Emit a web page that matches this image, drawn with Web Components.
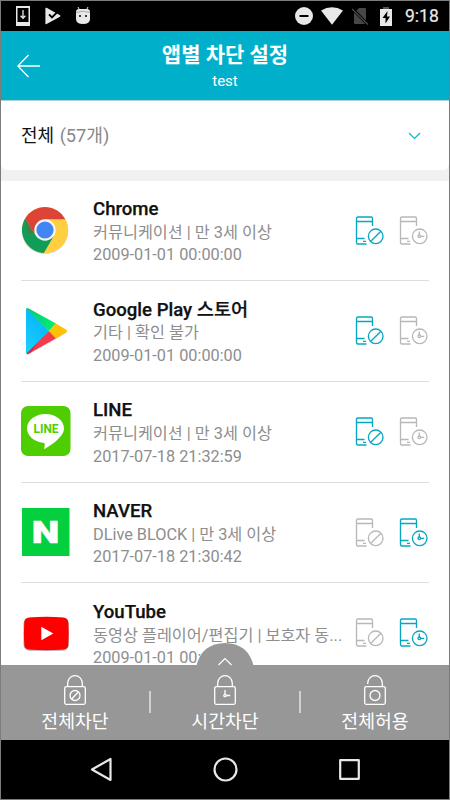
<!DOCTYPE html>
<html lang="ko">
<head>
<meta charset="utf-8">
<title>앱별 차단 설정</title>
<style>
html,body{margin:0;padding:0;overflow:hidden;background:#fff}
body{font-family:Roboto,"Noto Sans CJK KR",sans-serif}
</style>
</head>
<body>
<phone-screen>
  <status-bar></status-bar>
  <page-header><span slot="title">앱별 차단 설정</span><span slot="sub">test</span></page-header>
  <filter-bar><span slot="label">전체</span><span slot="count">(57개)</span></filter-bar>
  <app-list>
    <app-row icon="chrome" mode="block"><span slot="name">Chrome</span><span slot="meta">커뮤니케이션 | 만 3세 이상</span><span slot="date">2009-01-01 00:00:00</span></app-row>
    <app-row icon="play" mode="block"><span slot="name">Google Play 스토어</span><span slot="meta">기타 | 확인 불가</span><span slot="date">2009-01-01 00:00:00</span></app-row>
    <app-row icon="line" mode="block"><span slot="name">LINE</span><span slot="meta">커뮤니케이션 | 만 3세 이상</span><span slot="date">2017-07-18 21:32:59</span></app-row>
    <app-row icon="naver" mode="time"><span slot="name">NAVER</span><span slot="meta">DLive BLOCK | 만 3세 이상</span><span slot="date">2017-07-18 21:30:42</span></app-row>
    <app-row icon="youtube" mode="time"><span slot="name">YouTube</span><span slot="meta">동영상 플레이어/편집기 | 보호자 동...</span><span slot="date">2009-01-01 00:00:00</span></app-row>
  </app-list>
  <action-bar>
    <lock-action kind="block">전체차단</lock-action>
    <lock-action kind="time">시간차단</lock-action>
    <lock-action kind="open">전체허용</lock-action>
  </action-bar>
  <nav-bar></nav-bar>
</phone-screen>
<script>
function define(name, render) {
  customElements.define(name, class extends HTMLElement {
    constructor() {
      super();
      this.attachShadow({ mode: 'open' });
    }
    connectedCallback() {
      this.shadowRoot.innerHTML = render(this);
    }
  });
}

define('phone-screen', () => `<style>
:host{display:flex;flex-direction:column;box-sizing:border-box;width:450px;height:800px;border:1px solid #7c7c7c;background:#fff;overflow:hidden}
</style><slot></slot>`);

define('status-bar', () => `<style>
:host{display:flex;align-items:center;flex:none;height:30px;box-sizing:border-box;background:#000;color:#e8e8e8;padding:0 9px 0 15px}
svg{display:block;flex:none}
.a{margin-right:15px}.sp{flex:1}
.t{font-size:17.5px;font-weight:400;-webkit-text-stroke:.2px #e8e8e8;line-height:30px;width:35px;white-space:nowrap}
</style>
<svg class="a" width="14" height="20" viewBox="0 0 14 20"><path fill="#e8e8e8" fill-rule="evenodd" d="M0 0h14v20H0zM1.5 2v14h11V2z"/><path d="M7 4v8M4.6 9.800 7 12.300 9.400 9.800" fill="none" stroke="#e8e8e8" stroke-width="1.3"/></svg>
<svg class="a" width="16" height="18" viewBox="0 0 16 18"><path fill="#e8e8e8" d="M.4 1.500Q.4.300 1.600.8L15 8.200q1 .8 0 1.600L1.600 17q-1.200.6-1.200-.6z"/><path d="M4 7.400l3 3 8-8" fill="none" stroke="#000" stroke-width="2"/></svg>
<svg width="16" height="18" viewBox="0 0 16 18" style="margin-left:-1px"><path d="M3 0l1.500 3M13 0l-1.500 3" stroke="#e8e8e8" stroke-width="1"/><path fill="#e8e8e8" d="M1 5Q1 2 4 2h8q3 0 3 3v7q0 5-7 5T1 12z"/><path d="M1 5.500Q8 3 15 5.500" fill="none" stroke="#999" stroke-width=".8"/><circle cx="5" cy="9" r="1" fill="#000"/><circle cx="11" cy="9" r="1" fill="#000"/></svg>
<span class="sp"></span>
<svg width="18" height="18" viewBox="0 0 18 18" style="margin-right:8px"><circle cx="9" cy="9" r="9" fill="#e8e8e8"/><path d="M4.500 9h9" stroke="#000" stroke-width="2"/></svg>
<svg width="22" height="18" viewBox="0 0 22 18" style="margin-right:9px"><path fill="#e8e8e8" d="M0 3.600Q11-3 22 3.600L11 17.700z"/></svg>
<svg width="17" height="18" viewBox="0 0 17 18" style="margin-right:11px"><path fill="#474747" d="M7 1h6q1 0 1 1v14q0 1-1 1H3q-1 0-1-1V6z"/><path d="M.500 2 16 17.500" stroke="#000" stroke-width="3"/><path d="M0 2l16 15.500" stroke="#505050" stroke-width="1.200"/></svg>
<svg width="12" height="19" viewBox="0 0 12 19" style="margin-right:13px"><path d="M3 1h6" stroke="#555" stroke-width="2"/><path fill="#e8e8e8" d="M0 2h12v17H0z"/><path fill="#000" d="M7.500 4 2.500 11h3v5.500L10 9.500H7z"/></svg>
<span class="t">9:18</span>`);

define('page-header', () => `<style>
:host{display:grid;grid-template-columns:60px 1fr 60px;flex:none;height:70px;background:#00b0ca;color:#fff;align-items:start;border-bottom:1px solid #b0d0d6;box-sizing:border-box}
svg{margin:23px 0 0 16px}
.c{text-align:center;padding-top:10px}
.t{font-size:21px;font-weight:700;line-height:29px}
.s{font-size:15px;line-height:20px;margin-top:1px}
div{white-space:nowrap}
</style><svg width="23" height="24" viewBox="0 0 23 24"><path d="M11.500 1 .800 12l10.700 11M1 12h22" fill="none" stroke="#fff" stroke-width="1.300"/></svg>
<div class="c"><div class="t"><slot name="title"></slot></div><div class="s"><slot name="sub"></slot></div></div>`);

define('filter-bar', () => `<style>
:host{display:block;flex:none;background:#f1f1f1;height:79.500px}
.b{display:flex;box-sizing:border-box;height:69px;background:#fff;border-radius:0 0 6px 6px;align-items:center;padding:1px 28px 0 20px;font-size:18px;color:#111;line-height:24px}
.n{color:#888;margin-left:5.500px;flex:1;font-size:18.200px}
</style><div class="b"><slot name="label"></slot><span class="n"><slot name="count"></slot></span>
<svg width="13" height="8" viewBox="0 0 13 8"><path d="M1 1l5.500 5.500L12 1" fill="none" stroke="#08afc6" stroke-width="1.100"/></svg></div>`);

define('app-list', () => `<style>
:host{display:block;flex:none;height:484.500px;box-sizing:border-box;overflow:hidden;padding:0 20px;background:#fff}
</style><slot></slot>`);

const logos = {
  chrome: `<circle cx="24" cy="26" r="23.300" fill="#bbb" opacity=".5"/><g transform="translate(-1 0)"><circle cx="25" cy="25" r="23" fill="#ffcf40"/>
<path fill="#db4437" d="M5.080 13.500A23 23 0 0 1 45.500 14.500H25L16 30z"/>
<path fill="#0f9d58" d="M5.080 13.500A23 23 0 0 0 24 48L34 31 25 35 15.500 30z"/>
<path fill="#ffcf40" d="M25 14.500h20.500A23 23 0 0 1 24 48l10-17z"/>
<path fill="#c63a2e" opacity=".35" d="M5.500 13.500 8 29l8-2z"/>
<circle cx="25" cy="25" r="10.700" fill="#f5f5f5"/><circle cx="25" cy="25" r="8.600" fill="#4285f4"/></g>`,
  play: `<defs><linearGradient id="b" x1="0" y1="1" x2=".6" y2="0"><stop offset="0" stop-color="#20d0ff"/><stop offset="1" stop-color="#00b4f8"/></linearGradient><linearGradient id="g" x1="1" x2="0"><stop offset="0" stop-color="#00f076"/><stop offset="1" stop-color="#08c878"/></linearGradient></defs><g transform="translate(-1 0)">
<path d="M7 48.500 46 26l-39 21" stroke="#aaa" stroke-width="1.500" opacity=".5" fill="none"/>
<path fill="url(#b)" d="M6 3.500q0-1 1-1L29 25 7.500 48q-1.500 0-1.500-1.500z"/>
<path fill="url(#g)" d="M6.300 2.500q1-.9 2.500 0L36 17.500 28.800 25z"/>
<path fill="#ffc107" d="M35.500 17.300 46 23.500q2.200 1.500 0 3L35.500 32.700 28.800 25z"/>
<path fill="#f43b4c" d="M28.800 25l7 7.600L9 47.500q-1.500.8-2.500 0z"/><path fill="#b02b48" d="M6.500 47.500 17 37.500 11 46.500 9 47.500q-1.500.8-2.500 0z" opacity=".7"/></g>`,
  line: `<rect x="0" y="0" width="49.500" height="50" rx="7" fill="#4ecd00"/><path fill="#fff" d="M24.500 8C14.500 8 6 14.200 6 22.400 6 29.500 13 35.500 22 36.800c1.500.3 2 1 1.700 2.700L23 43c3-1.200 11-6 15.500-11.500 3-3 4.500-5.800 4.500-9C43 14.200 34.500 8 24.500 8z"/>
<text x="12.500" y="26.900" font-family="Roboto" font-weight="700" font-size="12" textLength="25" lengthAdjust="spacingAndGlyphs" fill="#4ecd00">LINE</text>`,
  naver: `<rect x="1" y="1" width="47.500" height="48" fill="#03cf3f"/><text x="10.800" y="36" font-family="Roboto" font-weight="900" font-size="31" textLength="27.500" lengthAdjust="spacingAndGlyphs" fill="#fff" stroke="#fff" stroke-width=".6">N</text>`,
  youtube: `<g transform="translate(.3 .3)"><rect x="2.200" y="9.500" width="45.300" height="33" rx="6" fill="#aaa"/><path fill="#f00" d="M8 9.300Q25 7.500 42 9.300q4.800.3 5 5 .8 11 0 22-.2 4.700-5 5-17 1.400-34 0-4.800-.3-5-5-.8-11 0-22 .2-4.700 5-5z"/><path fill="#fff" d="M20 18.500 32 25.200 20 32z"/></g>`
};

const device = `<path d="M17.500 10V2.500Q17.500 1 16 1H3Q1.500 1 1.500 2.500v24Q1.500 28 3 28h8.500"/><path d="M1.500 5.500h16M1.500 22.500h8M8 25.300h3"/>`;
define('mode-icon', el => `<style>
:host{display:block;flex:none;width:28px;height:29px;color:#b8b8b8}
:host([on]){color:#08a6c3}
svg{display:block;fill:none;stroke:currentColor;stroke-width:1.350}
</style><svg width="29" height="29" viewBox="0 0 29 29">${device}<circle cx="20.700" cy="20.300" r="7.300"/>${
  el.getAttribute('kind') === 'block' ? '<path d="M15.500 25.400 25.900 15.200"/>'
  : '<path d="M20.300 15.500v3.500M22 20.300h3.200"/><circle cx="20.300" cy="20.300" r="1.300"/>'}</svg>`);

define('app-row', el => {
  const block = el.getAttribute('mode') === 'block';
  return `<style>
:host{display:grid;grid-template-columns:72px 254px 1fr;box-sizing:border-box;height:100.700px;border-bottom:1px solid #dedede;align-items:start;white-space:nowrap}
.logo{display:block;margin-top:24.500px}
.x{padding-top:17.600px;color:#8e8e8e;font-size:16.270px;line-height:22.400px}
.n{font-size:18.600px;line-height:23.700px;font-weight:500;color:#111;-webkit-text-stroke:.25px #111}
.i{display:flex;justify-content:space-between;padding:35px 2px 0 7.500px}
</style>
<svg class="logo" width="50" height="50" viewBox="0 0 50 50">${logos[el.getAttribute('icon')]}</svg>
<div class="x"><div class="n"><slot name="name"></slot></div><div><slot name="meta"></slot></div><div><slot name="date"></slot></div></div>
<div class="i"><mode-icon kind="block" ${block ? 'on' : ''}></mode-icon><mode-icon kind="time" ${block ? '' : 'on'}></mode-icon></div>`;
});

define('action-bar', () => `<style>
:host{display:grid;grid-template-columns:repeat(3,150px);justify-content:center;position:relative;flex:none;height:74.500px;background:#979797}
.bump{position:absolute;left:195px;top:-22.500px;width:58px;height:25px}
.d{position:absolute;top:25.500px;width:1.500px;height:22px;background:#d0d0d0}
</style><svg class="bump" viewBox="0 0 58 25"><path fill="#979797" d="M0 25Q2 13 10 6 18 0 29 0T48 6q8 7 10 19z"/><path d="M22.500 22 29 15.500l6.500 6.500" fill="none" stroke="#fff" stroke-width="1.200"/></svg>
<i class="d" style="left:148px"></i><i class="d" style="left:298px"></i><slot></slot>`);

define('lock-action', el => {
  const k = el.getAttribute('kind');
  const inner = k === 'block' ? '<circle cx="11" cy="20.500" r="5"/><path d="M7.700 24 14.300 17"/>'
    : k === 'time' ? '<circle cx="11" cy="20.500" r="1.200"/><path d="M11 15v4.300M12.200 20.500h4"/>'
    : '<circle cx="11" cy="20.500" r="5"/>';
  return `<style>
:host{display:flex;flex-direction:column;align-items:center;padding-top:9.500px;color:#fff;font-size:18.300px;line-height:26px;white-space:nowrap}
svg{display:block;flex:none;fill:none;stroke:#fff;stroke-width:1.300;margin-bottom:3px}
</style><svg width="22" height="31" viewBox="0 0 22 31"><rect x=".7" y="11.700" width="20.600" height="17.600" rx="1.500"/><path d="${k === 'open' ? 'M3.700 9V8a7.300 7.300 0 0 1 14.600 0v3.700' : 'M3.700 11.700V8a7.300 7.300 0 0 1 14.600 0v3.700'}"/>${inner}</svg><slot></slot>`;
});

define('nav-bar', () => `<style>
:host{display:flex;flex:1;background:#000;align-items:center;justify-content:space-between;padding:0 89px 0 88.500px}
svg{display:block;fill:none;stroke:#e8e8e8;stroke-width:2.200;stroke-linejoin:round}
</style><svg width="22" height="25" viewBox="0 0 22 25"><path d="M20.500 2v21L2 12.500z"/></svg>
<svg width="25" height="25" viewBox="0 0 25 25"><circle cx="12.500" cy="12.500" r="11"/></svg>
<svg width="21" height="21" viewBox="0 0 21 21"><rect x="1.200" y="1.200" width="18.600" height="18.600"/></svg>`);
</script>
</body>
</html>
